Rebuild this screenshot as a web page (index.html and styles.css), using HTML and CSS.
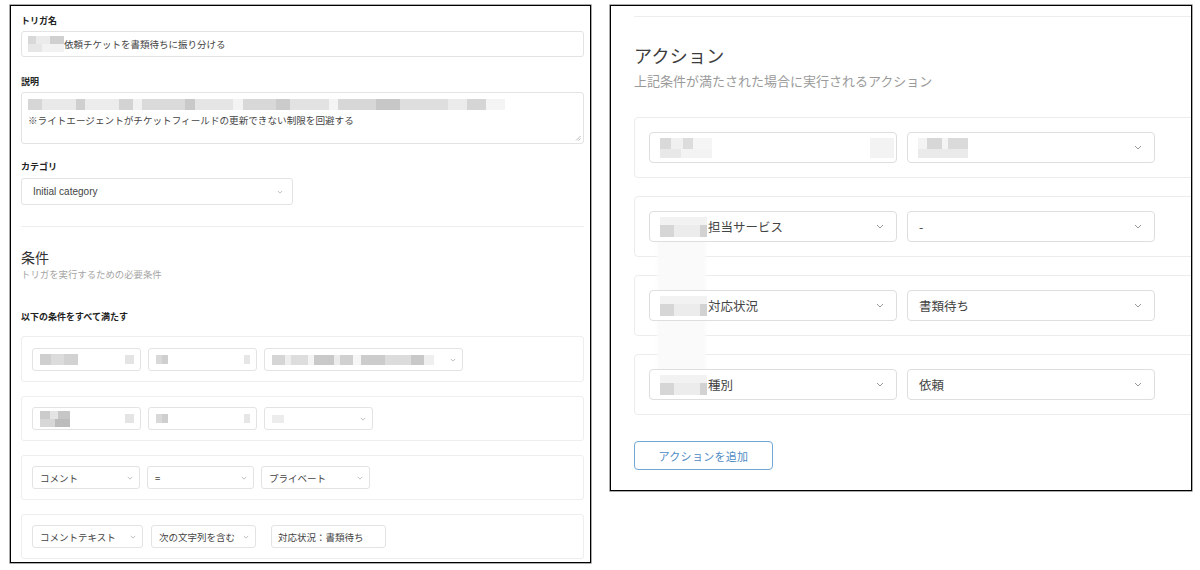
FILE: index.html
```html
<!DOCTYPE html>
<html lang="ja">
<head>
<meta charset="utf-8">
<title>トリガ設定</title>
<link rel="stylesheet" href="styles.css">
</head>
<body>
<div class="panel panel-left">
  <div class="label">トリガ名</div>
  <div class="text-input"><span class="mosaic m-name"></span><span>依頼チケットを書類待ちに振り分ける</span></div>

  <div class="label label-desc">説明</div>
  <div class="textarea">
    <div class="ta-line"><span class="mosaic m-desc"></span></div>
    <div class="ta-line">※ライトエージェントがチケットフィールドの更新できない制限を回避する</div>
    <svg class="resize" viewBox="0 0 6 6"><path d="M1 5.5L5.5 1M3.5 5.5L5.5 3.5" stroke="#aaa" stroke-width="0.8" fill="none"/></svg>
  </div>

  <div class="label label-cat">カテゴリ</div>
  <div class="select cat-select"><span class="latin">Initial category</span><svg class="chev" viewBox="0 0 8 5"><path d="M1 1l3 3 3-3" fill="none" stroke="#aaa" stroke-width="1"/></svg></div>

  <div class="divider"></div>

  <h2 class="section-title">条件</h2>
  <p class="section-sub">トリガを実行するための必要条件</p>

  <div class="label label-all">以下の条件をすべて満たす</div>

  <div class="cond-list">
    <div class="cond-card card-tall">
      <div class="select w109"><span class="mosaic m-c1a"></span><span class="mosaic m-c1r"></span></div>
      <div class="select w109"><span class="mosaic m-c1b"></span><span class="mosaic m-c1r2"></span></div>
      <div class="select w199"><span class="mosaic m-c1c"></span><svg class="chev" viewBox="0 0 8 5"><path d="M1 1l3 3 3-3" fill="none" stroke="#aaa" stroke-width="1"/></svg></div>
    </div>
    <div class="cond-card">
      <div class="select w109"><span class="mosaic m-c2a"></span><span class="mosaic m-c1r"></span></div>
      <div class="select w109"><span class="mosaic m-c1b"></span><span class="mosaic m-c1r2"></span></div>
      <div class="select w109"><span class="mosaic m-c2c"></span><svg class="chev" viewBox="0 0 8 5"><path d="M1 1l3 3 3-3" fill="none" stroke="#aaa" stroke-width="1"/></svg></div>
    </div>
    <div class="cond-card">
      <div class="select w108"><span>コメント</span><svg class="chev" viewBox="0 0 8 5"><path d="M1 1l3 3 3-3" fill="none" stroke="#aaa" stroke-width="1"/></svg></div>
      <div class="select w107"><span>=</span><svg class="chev" viewBox="0 0 8 5"><path d="M1 1l3 3 3-3" fill="none" stroke="#aaa" stroke-width="1"/></svg></div>
      <div class="select w109"><span>プライベート</span><svg class="chev" viewBox="0 0 8 5"><path d="M1 1l3 3 3-3" fill="none" stroke="#aaa" stroke-width="1"/></svg></div>
    </div>
    <div class="cond-card">
      <div class="select w111"><span>コメントテキスト</span><svg class="chev" viewBox="0 0 8 5"><path d="M1 1l3 3 3-3" fill="none" stroke="#aaa" stroke-width="1"/></svg></div>
      <div class="select w105"><span>次の文字列を含む</span><svg class="chev" viewBox="0 0 8 5"><path d="M1 1l3 3 3-3" fill="none" stroke="#aaa" stroke-width="1"/></svg></div>
      <div class="value-input">対応状況：書類待ち</div>
    </div>
  </div>
</div>

<div class="panel panel-right">
  <div class="r-divider"></div>
  <h2 class="r-title">アクション</h2>
  <p class="r-sub">上記条件が満たされた場合に実行されるアクション</p>

  <div class="action-list">
    <div class="action-card">
      <div class="r-select"><span class="mosaic m-a1"></span><span class="mosaic m-a1r"></span></div>
      <div class="r-select"><span class="mosaic m-a1b"></span><svg class="r-chev" viewBox="0 0 8 5"><path d="M1 1l3 3 3-3" fill="none" stroke="#999" stroke-width="1"/></svg></div>
    </div>
    <div class="action-card">
      <div class="r-select"><span class="mosaic m-a2"></span><span class="r-text">担当サービス</span><svg class="r-chev" viewBox="0 0 8 5"><path d="M1 1l3 3 3-3" fill="none" stroke="#999" stroke-width="1"/></svg></div>
      <div class="r-select"><span class="r-text">-</span><svg class="r-chev" viewBox="0 0 8 5"><path d="M1 1l3 3 3-3" fill="none" stroke="#999" stroke-width="1"/></svg></div>
    </div>
    <div class="action-card">
      <div class="r-select"><span class="mosaic m-a2"></span><span class="r-text">対応状況</span><svg class="r-chev" viewBox="0 0 8 5"><path d="M1 1l3 3 3-3" fill="none" stroke="#999" stroke-width="1"/></svg></div>
      <div class="r-select"><span class="r-text">書類待ち</span><svg class="r-chev" viewBox="0 0 8 5"><path d="M1 1l3 3 3-3" fill="none" stroke="#999" stroke-width="1"/></svg></div>
    </div>
    <div class="action-card">
      <div class="r-select"><span class="mosaic m-a2"></span><span class="r-text">種別</span><svg class="r-chev" viewBox="0 0 8 5"><path d="M1 1l3 3 3-3" fill="none" stroke="#999" stroke-width="1"/></svg></div>
      <div class="r-select"><span class="r-text">依頼</span><svg class="r-chev" viewBox="0 0 8 5"><path d="M1 1l3 3 3-3" fill="none" stroke="#999" stroke-width="1"/></svg></div>
    </div>
  </div>

  <button class="add-btn" type="button">アクションを追加</button>
  <div class="veil"></div>
</div>
</body>
</html>
```

FILE: styles.css
```css
* { box-sizing: border-box; }
html, body { margin: 0; background: #fff; }
body {
  width: 1200px;
  height: 570px;
  overflow: hidden;
  display: flex;
  align-items: flex-start;
  gap: 19px;
  padding: 5px 0 0 10px;
  font-family: "Noto Sans CJK JP", "Noto Sans", sans-serif;
  color: #333;
}

.panel {
  position: relative;
  border: 1px solid #000;
  box-shadow: 0 0 0 0.6px rgba(0, 0, 0, 0.55);
  background: #fff;
  overflow: hidden;
}

/* ---------- left panel ---------- */
.panel-left {
  width: 581px;
  height: 558px;
  padding: 9px 6px 0 10px;
  display: flex;
  flex-direction: column;
}

.label {
  font-size: 9px;
  line-height: 12px;
  font-weight: 700;
  color: #222;
}
.label-desc { margin-top: 19px; }
.label-cat { margin-top: 17px; }
.label-all { margin-top: 30px; }

.text-input {
  margin-top: 4px;
  height: 26px;
  border: 1px solid #e3e3e3;
  border-radius: 3px;
  display: flex;
  align-items: center;
  padding-left: 6px;
  font-size: 9.5px;
  color: #444;
}

.mosaic { display: inline-block; flex: none; filter: blur(0.5px); }

.m-name {
  width: 36px;
  height: 16px;
  background:
    linear-gradient(90deg, #d8d8d8 0 22%, #ebebeb 22% 60%, #d0d0d0 60% 100%) top/100% 50% no-repeat,
    linear-gradient(90deg, #e6e6e6 0 40%, #f2f2f2 40% 100%) bottom/100% 50% no-repeat;
}

.textarea {
  position: relative;
  margin-top: 4px;
  height: 52px;
  border: 1px solid #e3e3e3;
  border-radius: 3px;
  padding: 3px 6px 0 6px;
  font-size: 9.6px;
  line-height: 16px;
  color: #444;
}
.ta-line { height: 16px; display: flex; align-items: center; white-space: nowrap; }
.m-desc {
  width: 477px;
  height: 11px;
  background: linear-gradient(90deg,
    #d6d6d6 0 3%, #e9e9e9 3% 10%, #cfcfcf 10% 12%, #ececec 12% 19%, #d3d3d3 19% 22%,
    #f1f1f1 22% 24%, #dadada 24% 33%, #c9c9c9 33% 35%, #e5e5e5 35% 43%, #f3f3f3 43% 45%,
    #d8d8d8 45% 52%, #cbcbcb 52% 55%, #e2e2e2 55% 63%, #f4f4f4 63% 65%, #d7d7d7 65% 73%,
    #c7c7c7 73% 78%, #dedede 78% 88%, #ebebeb 88% 92%, #d5d5d5 92% 96%, #f4f4f4 96% 100%);
}
.resize { position: absolute; right: 2px; bottom: 2px; width: 6px; height: 6px; }

.select {
  height: 23px;
  border: 1px solid #e3e3e3;
  border-radius: 3px;
  display: flex;
  align-items: center;
  justify-content: space-between;
  padding: 0 6px 0 7px;
  font-size: 9.5px;
  color: #444;
  flex: none;
  white-space: nowrap;
}
.cat-select {
  margin-top: 5px;
  width: 272px;
  height: 27px;
  padding: 0 9px 0 11px;
}
.latin { font-family: "Liberation Sans", Arial, sans-serif; font-size: 10px; color: #444; }
.chev { width: 6px; height: 4px; flex: none; }

.divider { margin-top: 21px; height: 1px; background: #eeeeee; }

.section-title {
  margin: 20px 0 0;
  font-size: 14px;
  line-height: 20px;
  font-weight: 400;
  color: #333;
}
.section-sub {
  margin: 1px 0 0;
  font-size: 9.4px;
  line-height: 13px;
  color: #a5a5a5;
}

.cond-list {
  margin-top: 13px;
  display: flex;
  flex-direction: column;
  gap: 14px;
}
.cond-card {
  border: 1px solid #eeeeee;
  border-radius: 3px;
  padding: 10px 10px;
  display: flex;
  gap: 7px;
}
.card-tall { padding: 11px 10px 10px; }

.w105 { width: 105px; }
.w107 { width: 107px; }
.w108 { width: 108px; }
.w109 { width: 109px; }
.w111 { width: 111px; }
.w199 { width: 199px; }

.cond-card .w111 { margin-right: 1px; }

.value-input {
  margin-left: 8px;
  width: 115px;
  height: 23px;
  border: 1px solid #e3e3e3;
  border-radius: 3px;
  display: flex;
  align-items: center;
  padding-left: 6px;
  font-size: 9.5px;
  color: #444;
}

.m-c1a {
  width: 38px; height: 11px;
  background: linear-gradient(90deg, #cfcfcf 0 30%, #dcdcdc 30% 62%, #d2d2d2 62% 100%);
}
.m-c1r { width: 9px; height: 9px; background: #e4e4e4; }
.m-c1b { width: 12px; height: 9px; background: linear-gradient(90deg, #d9d9d9 0 50%, #cfcfcf 50%); }
.m-c1r2 { width: 6px; height: 9px; background: #e6e6e6; }
.m-c1c {
  width: 162px; height: 10px;
  background: linear-gradient(90deg,
    #d5d5d5 0 8%, #eeeeee 8% 12%, #dddddd 12% 22%, #f4f4f4 22% 26%, #c9c9c9 26% 38%,
    #ececec 38% 42%, #d0d0d0 42% 50%, #f6f6f6 50% 55%, #cccccc 55% 70%, #dcdcdc 70% 86%,
    #c8c8c8 86% 94%, #efefef 94% 100%);
}
.m-c2a {
  width: 30px; height: 16px;
  background:
    linear-gradient(90deg, #cbcbcb 0 35%, #e4e4e4 35% 60%, #c6c6c6 60% 100%) top/100% 50% no-repeat,
    linear-gradient(90deg, #d7d7d7 0 50%, #bcbcbc 50% 100%) bottom/100% 50% no-repeat;
}
.m-c2c { width: 12px; height: 8px; background: #ececec; }

/* ---------- right panel ---------- */
.panel-right {
  width: 582px;
  height: 486px;
  padding: 0 0 0 23px;
  display: flex;
  flex-direction: column;
}

.r-divider {
  margin-top: 10px;
  width: 640px;
  height: 1px;
  background: #ededed;
  flex: none;
}
.r-title {
  margin: 26px 0 0;
  font-size: 18px;
  line-height: 24px;
  font-weight: 400;
  color: #3c3c3c;
  letter-spacing: 0.3px;
}
.r-sub {
  margin: 5px 0 0;
  font-size: 13px;
  line-height: 18px;
  letter-spacing: 0;
  color: #9a9a9a;
  white-space: nowrap;
}

.action-list {
  margin-top: 27px;
  width: 640px;
  flex: none;
  display: flex;
  flex-direction: column;
  gap: 18px;
}
.action-card {
  border: 1px solid #ececec;
  border-radius: 4px;
  padding: 14px;
  display: flex;
  gap: 10px;
}
.r-select {
  position: relative;
  z-index: 2;
  width: 248px;
  height: 31px;
  border: 1px solid #dedede;
  border-radius: 4px;
  display: flex;
  align-items: center;
  padding: 0 12px 0 10px;
  font-size: 12.5px;
  color: #444;
  background: #fff;
  white-space: nowrap;
}
.r-chev { width: 8px; height: 5px; margin-left: auto; flex: none; }
.r-text { margin-left: 1px; }

.m-a1 {
  width: 52px; height: 20px;
  background:
    linear-gradient(90deg, #d9d9d9 0 22%, #f0f0f0 22% 45%, #dcdcdc 45% 64%, #f5f5f5 64% 100%) top/100% 55% no-repeat,
    linear-gradient(90deg, #e8e8e8 0 40%, #f3f3f3 40% 100%) bottom/100% 45% no-repeat;
}
.m-a1r { margin-left: auto; margin-right: -10px; width: 24px; height: 20px; background: #f3f3f3; }
.m-a1b {
  width: 50px; height: 20px;
  background:
    linear-gradient(90deg, #f3f3f3 0 18%, #d7d7d7 18% 48%, #f4f4f4 48% 60%, #dadada 60% 100%) top/100% 55% no-repeat,
    linear-gradient(90deg, #eaeaea 0 100%) bottom/100% 45% no-repeat;
}
.m-a2 {
  width: 47px; height: 20px;
  background:
    linear-gradient(90deg, #f2f2f2 0 100%) top/100% 40% no-repeat,
    linear-gradient(90deg, #d6d6d6 0 30%, #ececec 30% 85%, #d2d2d2 85% 100%) bottom/100% 60% no-repeat;
}

.veil {
  position: absolute;
  z-index: 1;
  left: 46px;
  top: 209px;
  width: 49px;
  height: 158px;
  background: rgba(250, 250, 250, 0.92);
  filter: blur(1px);
}

.add-btn {
  margin-top: 26px;
  width: 139px;
  height: 29px;
  border: 1px solid #72a7d6;
  border-radius: 4px;
  background: #fff;
  color: #4f8cc4;
  font-family: "Noto Sans CJK JP", "Noto Sans", sans-serif;
  font-size: 11px;
  letter-spacing: 0.3px;
  padding: 0;
  flex: none;
}
```
